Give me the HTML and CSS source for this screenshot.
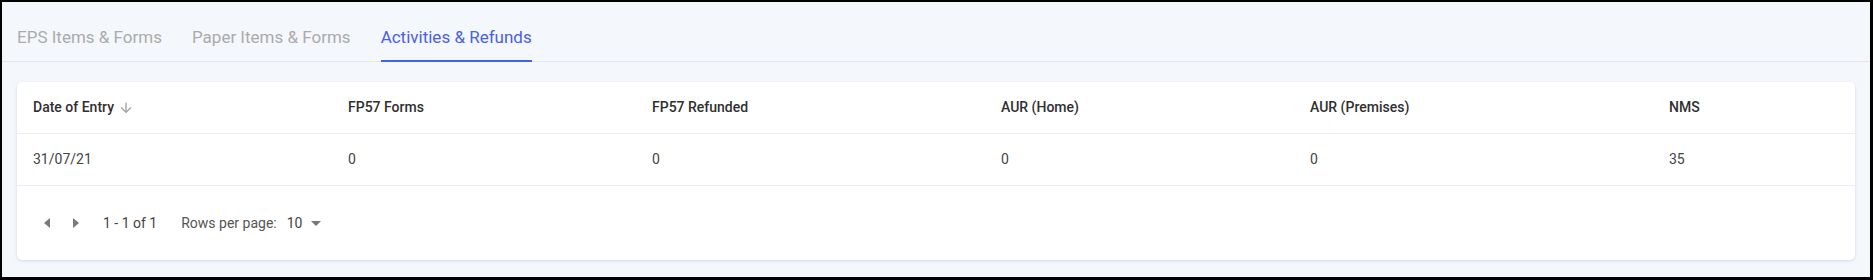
FILE: index.html
```html
<!DOCTYPE html>
<html lang="en">
<head>
    <meta charset="UTF-8">
    <meta name="viewport" content="width=device-width, initial-scale=1.0">
    <title>Activities &amp; Refunds</title>
    <link rel="stylesheet" href="styles.css">
</head>
<body>
    <div class="frame">
        <!-- Tabs -->
        <nav class="tabs">
            <a class="tab">EPS Items &amp; Forms</a>
            <a class="tab">Paper Items &amp; Forms</a>
            <a class="tab active">Activities &amp; Refunds</a>
        </nav>

        <div class="content">
            <div class="card">
                <table class="grid">
                    <colgroup>
                        <col class="c1"><col class="c2"><col class="c3"><col class="c4"><col class="c5"><col>
                    </colgroup>
                    <thead>
                        <tr>
                            <th>
                                <span class="sortable">Date of Entry
                                    <svg class="sort-icon" viewBox="0 0 24 24" width="16" height="16"><path d="M20 12l-1.41-1.41L13 16.17V4h-2v12.17l-5.58-5.59L4 12l8 8 8-8z"/></svg>
                                </span>
                            </th>
                            <th>FP57 Forms</th>
                            <th>FP57 Refunded</th>
                            <th>AUR (Home)</th>
                            <th>AUR (Premises)</th>
                            <th>NMS</th>
                        </tr>
                    </thead>
                    <tbody>
                        <tr>
                            <td>31/07/21</td>
                            <td>0</td>
                            <td>0</td>
                            <td>0</td>
                            <td>0</td>
                            <td>35</td>
                        </tr>
                    </tbody>
                </table>

                <!-- Paginering -->
                <div class="pager">
                    <button class="page-btn prev"><svg viewBox="0 0 6 10" width="6" height="10"><path d="M6 0v10L0 5z"/></svg></button>
                    <button class="page-btn next"><svg viewBox="0 0 6 10" width="6" height="10"><path d="M0 0v10l6-5z"/></svg></button>
                    <span class="range">1 - 1 of 1</span>
                    <span class="rows-label">Rows per page:</span>
                    <span class="rows-value">10</span>
                    <svg class="caret" viewBox="0 0 10 5" width="10" height="5"><path d="M0 0h10L5 5z"/></svg>
                </div>
            </div>
        </div>
    </div>
</body>
</html>
```

FILE: styles.css
```css
html, body {
    margin: 0;
    height: 100%;
}
body {
    font-family: Roboto, "Liberation Sans", Arial, sans-serif;
    background-color: #000;
}
.frame {
    box-sizing: border-box;
    height: 100vh;
    border-style: solid;
    border-color: #000;
    border-width: 2px 3px 3px 2px;
    background-color: #f4f7fc;
    display: flex;
    flex-direction: column;
}
.tabs {
    display: flex;
    gap: 30px;
    padding: 0 15px;
    height: 59px;
    border-bottom: 1px solid #e3e8f0;
}
.tab {
    font-size: 17px;
    line-height: 20px;
    padding: 25px 0 13px;
    margin-bottom: -1px;
    color: #ababab;
    border-bottom: 2px solid transparent;
    cursor: pointer;
}
.tab.active {
    color: #4a5fe3;
    border-bottom-color: #4263eb;
}
.content {
    padding: 20px 15px 17px;
}
.card {
    background: white;
    border-radius: 5px;
    box-shadow: 0 1px 3px rgba(60, 80, 120, 0.18);
}
.grid {
    width: 100%;
    table-layout: fixed;
    border-collapse: collapse;
}
.c1 { width: 315px; }
.c2 { width: 304px; }
.c3 { width: 349px; }
.c4 { width: 309px; }
.c5 { width: 359px; }
.grid th, .grid td {
    text-align: left;
    font-size: 14px;
    line-height: 19px;
    padding: 16px 16px;
    border-bottom: 1px solid #e8ecf3;
    white-space: nowrap;
}
.grid th {
    font-weight: 500;
    color: #2f2f2f;
}
.grid td {
    color: #444;
}
.sortable {
    display: inline-flex;
    align-items: center;
    gap: 4px;
}
.sort-icon {
    fill: #a3a3a3;
}
.pager {
    display: flex;
    align-items: center;
    height: 74px;
    padding-left: 16px;
    font-size: 14px;
    color: #555;
}
.page-btn {
    display: flex;
    align-items: center;
    justify-content: center;
    height: 28px;
    padding: 0;
    border: none;
    background: none;
    cursor: pointer;
}
.page-btn svg {
    fill: #7a7a7a;
}
.page-btn.prev {
    width: 28px;
}
.page-btn.next {
    width: 30px;
}
.range {
    margin-left: 12px;
    color: #444;
}
.rows-label {
    margin-left: 24px;
}
.rows-value {
    margin-left: 10px;
    color: #444;
}
.caret {
    margin-left: 9px;
    fill: #777;
}
```
